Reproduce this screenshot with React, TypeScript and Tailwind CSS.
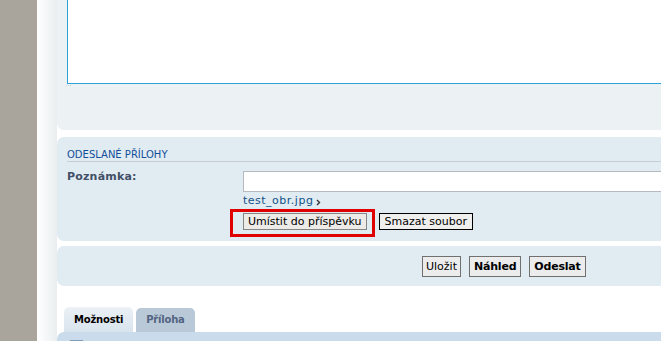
export default function App() {
  return (
    <div className="flex h-[341px] w-[661px] overflow-hidden bg-white font-['DejaVu_Sans',Verdana,sans-serif] text-[11px] text-black">
      <div className="w-[37px] shrink-0 bg-[#a9a49c]" />
      <div className="w-[20px] shrink-0 bg-gradient-to-r from-white to-[#eaeef0]" />

      <div className="flex min-w-0 flex-1 flex-col overflow-hidden">
        {/* message editor */}
        <div className="h-[130px] shrink-0 rounded-bl-[7px] bg-[#ecf1f3] pl-[10px]">
          <div className="h-[84px] w-[640px] bg-[#2aa2d4] px-[1px] pb-[1px]">
            <div className="h-full w-full bg-white" />
          </div>
          <div className="ml-[-1px] mt-[1px] flex gap-[1px]">
            <span className="h-[1px] w-[1px] bg-[#c9d3d8]" />
            <span className="h-[1px] w-[1px] bg-[#c9d3d8]" />
            <span className="h-[1px] w-[1px] bg-[#c9d3d8]" />
          </div>
        </div>

        {/* attachments */}
        <div className="mt-[7px] h-[104px] shrink-0 rounded-l-[7px] bg-[#e1ebf2] pl-[10px]">
          <h3 className="border-b border-[#c8cdd2] pt-[12px] text-[10px] leading-[12px] font-normal uppercase text-[#115098]">
            Odeslané přílohy
          </h3>
          <div className="mt-[8px] flex">
            <div className="w-[176px] shrink-0 leading-[14px] font-bold tracking-[0.2px] text-[#425067]">
              Poznámka:
            </div>
            <div className="flex flex-col pt-[1px]">
              <div className="h-[21px] w-[460px] border border-[#b4bac0] bg-white" />
              <a className="mt-[2px] flex items-center gap-[3px] leading-[14px] text-[#105289]">
                <span className="tracking-[0.5px]">test_obr.jpg</span>
                <svg width="5" height="7" viewBox="0 0 5 7" className="mt-[2px]">
                  <path d="M1 1 L3.5 3.5 L1 6" stroke="#333" strokeWidth="1.4" fill="none" />
                </svg>
              </a>
              <div className="mt-[5px] flex gap-[12px]">
                <div className="relative">
                  <button className="h-[17px] border border-[#858585] bg-[#ecebe7] px-[4px] leading-none">
                    Umístit do příspěvku
                  </button>
                  <span className="pointer-events-none absolute -top-[4px] -right-[8px] -bottom-[6px] -left-[13px] border-[3px] border-[#e00000]" />
                </div>
                <button className="h-[17px] border border-black bg-[#efefed] px-[5px] leading-none">
                  Smazat soubor
                </button>
              </div>
            </div>
          </div>
        </div>

        {/* submit buttons */}
        <div className="mt-[5px] flex h-[40px] shrink-0 items-start gap-[8px] rounded-l-[7px] bg-[#e1ebf2] pl-[365px] pt-[10px]">
          <button className="h-[21px] border border-[#707070] bg-[#ececec] px-[3px] leading-none">
            Uložit
          </button>
          <button className="h-[21px] border border-[#707070] bg-[#ececec] px-[4px] leading-none font-bold tracking-[-0.2px]">
            Náhled
          </button>
          <button className="h-[21px] border border-[#707070] bg-[#ececec] px-[4px] leading-none font-bold tracking-[-0.2px]">
            Odeslat
          </button>
        </div>

        {/* tabs */}
        <div className="mt-[21px] flex shrink-0 gap-[3px] pl-[7px]">
          <div className="h-[25px] rounded-t-[5px] border-t border-[#eef3f7] bg-gradient-to-b from-[#eaf0f5] to-[#d9e4ed] px-[10px] pt-[6px] text-[10px] leading-[12px] font-bold tracking-[-0.2px] text-black">
            Možnosti
          </div>
          <div className="mt-[1px] h-[24px] rounded-t-[5px] bg-[#b9c9d8] px-[10px] pt-[6px] text-[10px] leading-[12px] font-bold tracking-[-0.2px] text-[#536482]">
            Příloha
          </div>
        </div>
        <div className="flex-1 rounded-tl-[7px] bg-[#cadceb] pl-[13px] pt-[6px]">
          <label className="flex items-center gap-[6px] text-[#333]">
            <span className="h-[13px] w-[13px] border border-[#7f9db9] bg-white" />
            Vypnout BBCode
          </label>
        </div>
      </div>
    </div>
  );
}
